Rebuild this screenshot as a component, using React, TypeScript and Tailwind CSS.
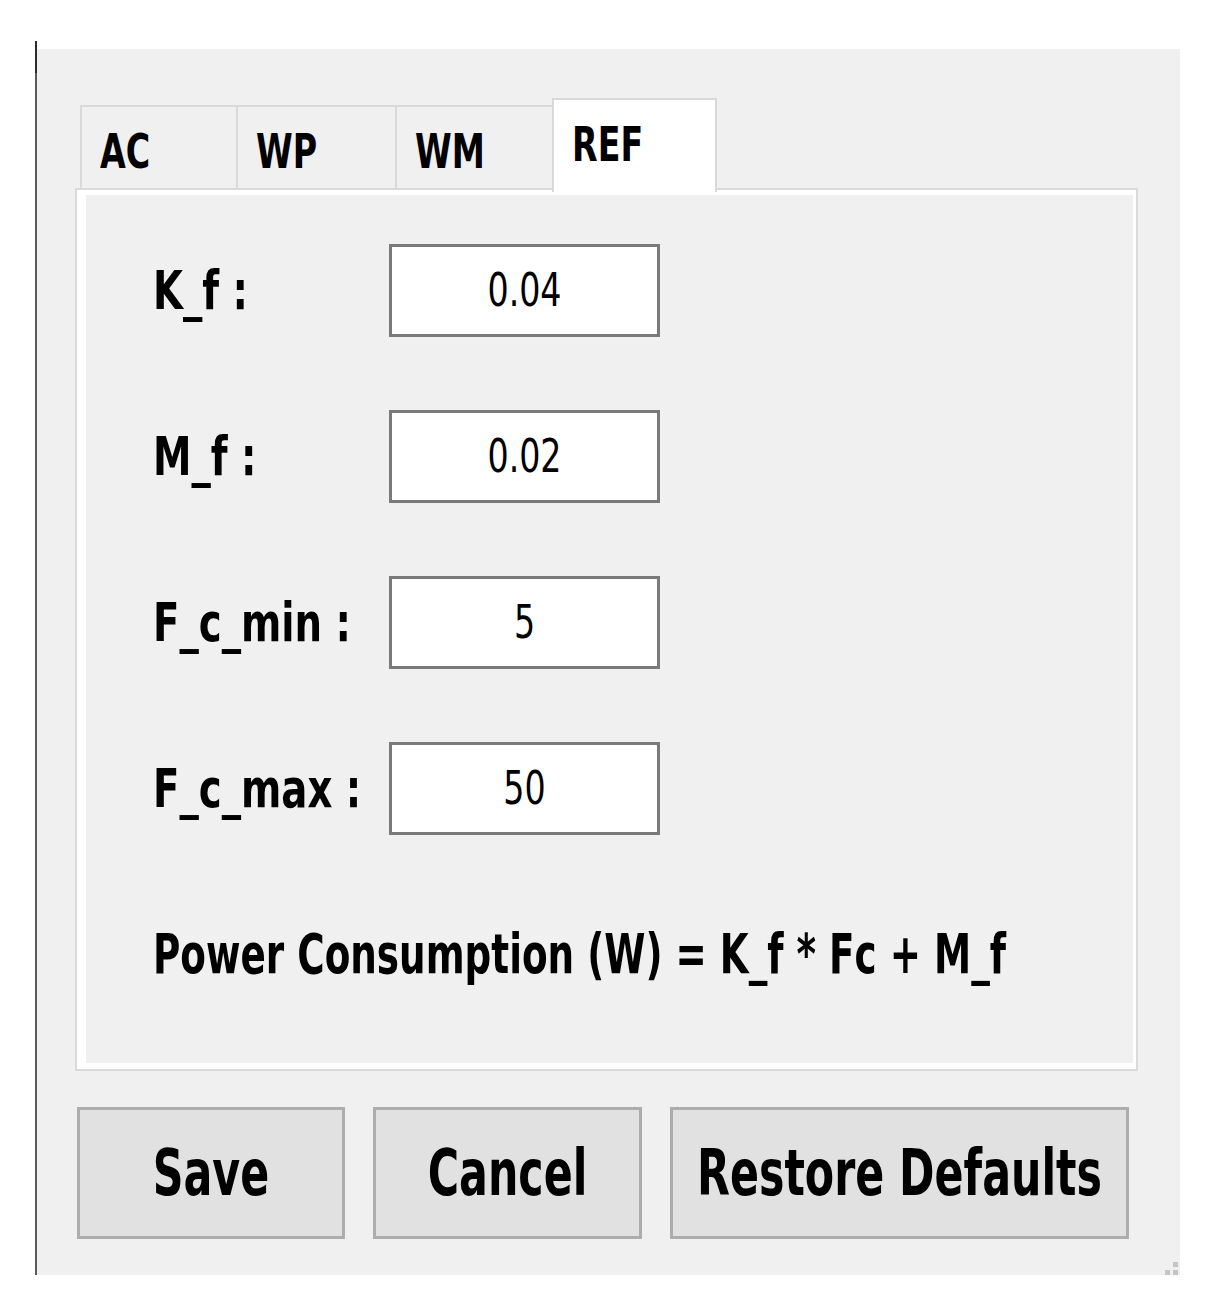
import React from 'react'

const tabs = [
  { label: 'AC', w: 'w-[156px]' },
  { label: 'WP', w: 'w-[159px]' },
  { label: 'WM', w: 'w-[157px]' },
]

const fields = [
  { label: 'K_f :', value: '0.04' },
  { label: 'M_f :', value: '0.02' },
  { label: 'F_c_min :', value: '5' },
  { label: 'F_c_max :', value: '50' },
]

const buttons = [
  { label: 'Save', w: 'w-[268px]' },
  { label: 'Cancel', w: 'w-[269px]' },
  { label: 'Restore Defaults', w: 'w-[459px]' },
]

export default function App() {
  return (
    <div className="w-[1205px] h-[1305px] bg-white text-black font-['DejaVu_Sans_Condensed','DejaVu_Sans',sans-serif] font-stretch-condensed">
      <div className="ml-[35px] pt-[41px] flex h-[1275px]">
        {/* window edge */}
        <div className="w-[2px] bg-[#5a5a5a] flex flex-col">
          <div className="h-[32px] bg-[#2c2c2c]" />
        </div>

        <div className="flex flex-col w-[1143px]">
          <div className="h-[8px] bg-white" />
          <div className="flex-1 bg-[#f0f0f0] pl-[38px] pt-[49px] relative">
            {/* Tabs */}
            <div className="flex items-end h-[90px] pl-[5px]">
              {tabs.map((t) => (
                <div
                  key={t.label}
                  className={`${t.w} h-[83px] border-t-2 border-l-2 border-[#d9d9d9] bg-[#f0f0f0] pl-[18px] pt-[26px]`}
                >
                  <span className="inline-block scale-y-[1.3] text-[37px] font-bold leading-none">
                    {t.label}
                  </span>
                </div>
              ))}
              <div className="relative z-10 w-[165px] h-[94px] -mb-[4px] border-2 border-b-0 border-[#d9d9d9] bg-white pl-[18px] pt-[26px]">
                <span className="inline-block scale-y-[1.3] text-[37px] font-bold leading-none">REF</span>
              </div>
            </div>

            {/* Panel */}
            <div className="w-[1063px] h-[883px] border-2 border-[#dadada]">
              <div className="h-full border-l-[9px] border-t-[5px] border-r-[3px] border-b-[6px] border-white pl-[67px] pt-[49px]">
                <div className="flex flex-col gap-[73px]">
                  {fields.map((f) => (
                    <div key={f.label} className="flex items-center h-[93px]">
                      <div className="w-[236px]">
                        <span className="inline-block scale-y-[1.25] text-[43px] font-bold leading-none whitespace-nowrap">
                          {f.label}
                        </span>
                      </div>
                      <div className="w-[271px] h-[93px] border-[3px] border-[#7a7a7a] bg-white flex items-center justify-center">
                        <span className="inline-block scale-y-[1.25] text-[37px] leading-none">{f.value}</span>
                      </div>
                    </div>
                  ))}
                </div>
                <div className="mt-[98px]">
                  <span className="inline-block scale-y-[1.35] text-[41.5px] font-bold leading-none whitespace-nowrap">
                    Power Consumption (W) = K_f * Fc + M_f
                  </span>
                </div>
              </div>
            </div>

            {/* Buttons */}
            <div className="flex gap-[28px] mt-[36px] ml-[2px]">
              {buttons.map((b) => (
                <button
                  key={b.label}
                  className={`${b.w} h-[132px] border-[3px] border-[#adadad] bg-[#e1e1e1] flex items-center justify-center`}
                >
                  <span className="inline-block scale-y-[1.34] text-[47.5px] font-bold leading-none whitespace-nowrap">
                    {b.label}
                  </span>
                </button>
              ))}
            </div>

            {/* size grip */}
            <div className="absolute right-[2px] bottom-0 flex flex-col items-end gap-[3px]">
              <div className="w-[5px] h-[5px] bg-[#c4c4c4]" />
              <div className="flex gap-[3px]">
                <div className="w-[5px] h-[5px] bg-[#c4c4c4]" />
                <div className="w-[5px] h-[5px] bg-[#c4c4c4]" />
              </div>
            </div>
          </div>
        </div>
      </div>
    </div>
  )
}
